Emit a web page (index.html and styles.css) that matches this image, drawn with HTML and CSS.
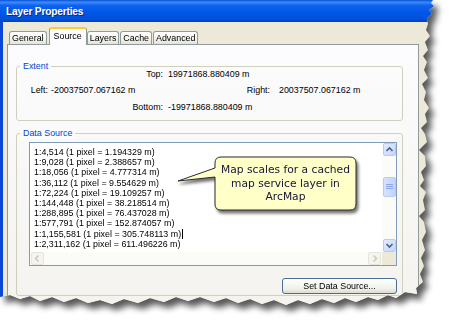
FILE: index.html
```html
<!DOCTYPE html>
<html>
<head>
    <meta charset="utf-8">
    <title>Layer Properties</title>
    <link rel="stylesheet" href="styles.css">
</head>
<body>
    <div class="stage">
        <div class="shadow">
            <div class="window">
                <div class="titlebar">Layer Properties</div>
                <div class="frame">
                    <div class="tabs">
                        <div class="tab">General</div>
                        <div class="tab active">Source</div>
                        <div class="tab">Layers</div>
                        <div class="tab">Cache</div>
                        <div class="tab">Advanced</div>
                    </div>
                    <div class="page">
                        <div class="group extent">
                            <span class="group-title">Extent</span>
                            <div class="ext-row">
                                <span class="lbl lbl-wide">Top:</span>
                                <span>19971868.880409 m</span>
                            </div>
                            <div class="ext-row">
                                <span class="lbl lbl-left">Left:</span>
                                <span class="val-left">-20037507.067162 m</span>
                                <span class="lbl lbl-right">Right:</span>
                                <span>20037507.067162 m</span>
                            </div>
                            <div class="ext-row">
                                <span class="lbl lbl-wide">Bottom:</span>
                                <span>-19971868.880409 m</span>
                            </div>
                        </div>
                        <div class="group source">
                            <span class="group-title">Data Source</span>
                            <div class="listbox">
                                <div class="list-text">
                                    <div>1:4,514 (1 pixel = 1.194329 m)</div>
                                    <div>1:9,028 (1 pixel = 2.388657 m)</div>
                                    <div>1:18,056 (1 pixel = 4.777314 m)</div>
                                    <div>1:36,112 (1 pixel = 9.554629 m)</div>
                                    <div>1:72,224 (1 pixel = 19.109257 m)</div>
                                    <div>1:144,448 (1 pixel = 38.218514 m)</div>
                                    <div>1:288,895 (1 pixel = 76.437028 m)</div>
                                    <div>1:577,791 (1 pixel = 152.874057 m)</div>
                                    <div>1:1,155,581 (1 pixel = 305.748113 m)<span class="caret"></span></div>
                                    <div>1:2,311,162 (1 pixel = 611.496226 m)</div>
                                </div>
                                <div class="vbar">
                                    <div class="sb-btn">
                                        <svg width="13" height="13" viewBox="0 0 13 13"><path d="M3.5 8 L6.5 5 L9.5 8" fill="none" stroke="#4d6185" stroke-width="1.6"/></svg>
                                    </div>
                                    <div class="vtrack">
                                        <div class="thumb">
                                            <svg width="7" height="6" viewBox="0 0 7 6"><path d="M0 0.5 H7 M0 2.5 H7 M0 4.5 H7" stroke="#8ca5e6" stroke-width="1"/></svg>
                                        </div>
                                    </div>
                                    <div class="sb-btn">
                                        <svg width="13" height="13" viewBox="0 0 13 13"><path d="M3.5 5 L6.5 8 L9.5 5" fill="none" stroke="#4d6185" stroke-width="1.6"/></svg>
                                    </div>
                                </div>
                                <div class="hbar">
                                    <div class="sb-btn off">
                                        <svg width="13" height="13" viewBox="0 0 13 13"><path d="M7.5 3.5 L4.5 6.5 L7.5 9.5" fill="none" stroke="#c9c7ba" stroke-width="1.4"/></svg>
                                    </div>
                                    <div class="htrack"></div>
                                    <div class="sb-btn off">
                                        <svg width="13" height="13" viewBox="0 0 13 13"><path d="M5.5 3.5 L8.5 6.5 L5.5 9.5" fill="none" stroke="#c9c7ba" stroke-width="1.4"/></svg>
                                    </div>
                                </div>
                                <div class="corner"></div>
                            </div>
                            <div class="btn-row">
                                <button class="btn">Set Data Source...</button>
                            </div>
                        </div>
                    </div>
                </div>
            </div>
        </div>

        <!-- callout laid over the list -->
        <div class="callout">
            <svg class="callout-shape" width="190" height="64" viewBox="0 0 190 64">
                <path d="M45 2 H174 Q180 2 180 8 V49 Q180 55 174 55 H45 Q39 55 39 49 V22 L2 26 L39 13 V8 Q39 2 45 2 Z"
                      fill="#ffffc8" stroke="#2a2a2a" stroke-width="1"/>
            </svg>
            <div class="callout-text">Map scales for a cached<br>map service layer in<br>ArcMap</div>
        </div>
    </div>
</body>
</html>
```

FILE: styles.css
```css
* {
    box-sizing: border-box;
}

body {
    margin: 0;
    background-color: #fff;
    font-family: "Liberation Sans", Arial, sans-serif;
    font-size: 8.9px;
    color: #000;
}

.stage {
    position: relative;
    width: 453px;
    height: 329px;
    overflow: hidden;
}

.shadow {
    width: 440px;
    filter: drop-shadow(5px 6px 3px rgba(0, 0, 0, 0.65));
}

.window {
    width: 436px;
    height: 305px;
    display: flex;
    flex-direction: column;
    background-color: #ece9d8;
    clip-path: polygon(0 0, 433px 0, 431px 3px, 434px 6px, 429px 10px, 432px 14px, 427px 18px, 428px 24px, 426px 30px, 430px 36px, 425px 42px, 428px 50px, 423px 56px, 427px 62px, 424px 70px, 428px 78px, 422px 84px, 426px 92px, 424px 100px, 429px 108px, 425px 114px, 427px 122px, 421px 128px, 425px 134px, 427px 142px, 419px 150px, 425px 156px, 426px 166px, 421px 172px, 424px 180px, 420px 186px, 426px 192px, 423px 200px, 425px 210px, 419px 216px, 424px 222px, 426px 232px, 422px 240px, 425px 250px, 421px 258px, 424px 266px, 420px 274px, 423px 282px, 416px 288px, 417px 294px, 405px 292px, 396px 298px, 388px 295px, 378px 300px, 368px 297px, 356px 302px, 345px 298px, 334px 303px, 322px 299px, 310px 304px, 298px 300px, 286px 305px, 274px 300px, 262px 304px, 250px 299px, 238px 303px, 226px 298px, 214px 302px, 200px 297px, 188px 301px, 176px 297px, 164px 302px, 150px 298px, 138px 303px, 124px 299px, 112px 304px, 100px 300px, 88px 303px, 76px 298px, 64px 302px, 52px 297px, 40px 301px, 30px 296px, 20px 299px, 10px 295px, 0 297px);
}

.titlebar {
    height: 22px;
    padding: 2px 0 0 6px;
    line-height: 20px;
    color: #fff;
    font-weight: bold;
    font-size: 10.2px;
    letter-spacing: -0.2px;
    text-shadow: 1px 1px 0 #0c2a8c;
    background: linear-gradient(#0a4fd8 0%, #3b8cfb 10%, #0f62f0 25%, #0058e8 55%, #0050dc 85%, #0442c0 100%);
}

.frame {
    flex: 1;
    display: flex;
    flex-direction: column;
    padding: 5px 0 0 4px;
    border-left: 3px solid #0b47d6;
}

.tabs {
    display: flex;
    align-items: flex-end;
    height: 17px;
    margin-left: 2px;
    position: relative;
    z-index: 1;
}

.tab {
    height: 13px;
    padding: 0 2px;
    margin-right: 1px;
    line-height: 12px;
    border: 1px solid #919b9c;
    border-bottom: none;
    border-radius: 3px 3px 0 0;
    background: linear-gradient(#ffffff, #f3f2ec 60%, #e4e2d8);
}

.tab.active {
    height: 18px;
    margin: 0 0 -1px 1px;
    padding: 1px 4px 0;
    border-top: 2px solid #ffc83c;
    background: #fcfcfe;
}

.page {
    flex: 1;
    width: 412px;
    padding: 21px 15px 0 8px;
    border: 1px solid #919b9c;
    border-bottom: none;
    background: linear-gradient(#fcfcfe, #f4f3ee);
}

.group {
    position: relative;
    border: 1px solid #d0d0bf;
    border-radius: 3px;
}

.group-title {
    position: absolute;
    top: -6px;
    left: 3px;
    padding: 0 3px;
    line-height: 11px;
    color: #0046d5;
    background-color: #fcfcfe;
}

.extent {
    height: 55px;
    padding-top: 1.5px;
    display: flex;
    flex-direction: column;
    gap: 5.5px;
}

.ext-row {
    display: flex;
    line-height: 11px;
    white-space: nowrap;
}

.lbl {
    text-align: right;
}

.lbl-wide {
    width: 146px;
    margin-right: 5px;
}

.lbl-left {
    width: 31px;
    margin-right: 3px;
}

.val-left {
    width: 150px;
}

.lbl-right {
    width: 69px;
    margin-right: 9px;
}

.source {
    margin-top: 12px;
    padding: 8px 5px 1px 12px;
}

.listbox {
    height: 124px;
    display: grid;
    grid-template-columns: 1fr 14px;
    grid-template-rows: 1fr 13px;
    border: 1px solid #7f9db9;
    background-color: #fff;
}

.list-text {
    padding: 4px 0 0 4px;
    line-height: 10.2px;
    white-space: nowrap;
    overflow: hidden;
}

.caret {
    display: inline-block;
    width: 1px;
    height: 10px;
    margin-left: 1px;
    vertical-align: -2px;
    background-color: #000;
}

.vbar {
    display: flex;
    flex-direction: column;
    padding-left: 1px;
    background-color: #fbfbf8;
}

.sb-btn {
    width: 13px;
    height: 13px;
    border: 1px solid #b6cbf7;
    border-radius: 2px;
    background: linear-gradient(135deg, #e3ecff, #c4d5fc);
}

.sb-btn svg {
    display: block;
    margin: -1px;
}

.sb-btn.off {
    border-color: #e8e6dc;
    background: #f5f4ef;
}

.vtrack {
    flex: 1;
    padding-top: 21px;
}

.thumb {
    width: 13px;
    height: 20px;
    display: flex;
    align-items: center;
    justify-content: center;
    border: 1px solid #b6cbf7;
    border-radius: 2px;
    background: linear-gradient(90deg, #d6e2fe, #c2d3fc);
}

.hbar {
    display: flex;
    padding: 0 1px;
    background-color: #fbfbf8;
}

.htrack {
    flex: 1;
}

.corner {
    background-color: #ece9d8;
}

.btn-row {
    display: flex;
    justify-content: flex-end;
    margin-top: 12px;
}

.btn {
    width: 115px;
    height: 16px;
    padding: 0;
    font-family: inherit;
    font-size: 8.9px;
    color: #000;
    border: 1px solid #4a6d93;
    border-radius: 3px;
    background: linear-gradient(#ffffff, #f1f0ea 70%, #dedbcf);
}

.callout {
    position: absolute;
    left: 176px;
    top: 155px;
    width: 190px;
    height: 64px;
}

.callout-shape {
    display: block;
    filter: drop-shadow(2px 3px 1.5px rgba(0, 0, 0, 0.55));
}

.callout-text {
    position: absolute;
    left: 39px;
    top: 8px;
    width: 141px;
    text-align: center;
    font-family: "DejaVu Sans", Verdana, sans-serif;
    font-size: 10.7px;
    line-height: 13.5px;
    color: #14143c;
}
```
